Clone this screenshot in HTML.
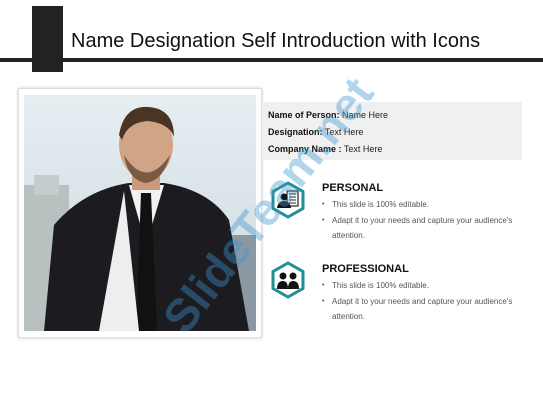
<!DOCTYPE html>
<html><head><style>
body{margin:0;width:543px;height:403px;background:#fff;font-family:"Liberation Sans",sans-serif;position:relative;overflow:hidden}
.abs{position:absolute}
.info{font-size:9px;color:#222;line-height:17px}
.info b{color:#111}
h3{margin:0;font-size:11px;font-weight:bold;color:#111}
ul{margin:0;padding:0;list-style:none;font-size:8px;color:#555;line-height:15.5px}
li{padding-left:10px;position:relative}
li:before{content:"•";position:absolute;left:0;font-size:7px}
</style></head><body>
<div class="abs" style="left:0;top:58px;width:543px;height:4px;background:#222"></div>
<div class="abs" style="left:32px;top:6px;width:31px;height:66px;background:#222"></div>
<div class="abs" style="left:71px;top:30px;font-size:20px;color:#111">Name Designation Self Introduction with Icons</div>

<div class="abs" style="left:18px;top:88px;width:242px;height:248px;border:1px solid #ddd;box-shadow:0 0 3px #ccc;background:#fff"></div>
<svg class="abs" style="left:24px;top:95px" width="232" height="236" viewBox="0 0 232 236">
<defs><linearGradient id="s" x1="0" y1="0" x2="0" y2="1"><stop offset="0" stop-color="#e6eef2"/><stop offset="1" stop-color="#cdd8de"/></linearGradient></defs>
<rect width="232" height="236" fill="url(#s)"/>
<rect x="0" y="90" width="45" height="146" fill="#b8c0c0"/>
<rect x="10" y="80" width="25" height="20" fill="#c5cccc"/>
<rect x="200" y="140" width="32" height="96" fill="#8a98a4"/>
<path d="M20 236 L30 130 Q60 95 105 88 L140 88 Q185 95 205 125 L225 236 Z" fill="#1c1c20"/>
<path d="M105 90 L122 150 L140 90 Z" fill="#f2f2f2"/>
<path d="M117 98 L127 98 L133 236 L112 236 Z" fill="#111"/>
<path d="M100 96 L115 236 L75 236 Z" fill="#eee"/>
<rect x="108" y="60" width="28" height="35" fill="#c99a7e"/>
<ellipse cx="122" cy="50" rx="27" ry="34" fill="#d2a487"/>
<path d="M95 40 Q100 10 125 12 Q150 14 150 42 Q145 28 123 26 Q103 28 98 45 Z" fill="#4a3524"/>
<path d="M100 60 Q122 95 146 60 Q140 85 122 88 Q104 85 100 60Z" fill="#7a5a44"/>
</svg>

<div class="abs" style="left:262px;top:102px;width:260px;height:58px;background:#f0f0f0"></div>
<div class="abs info" style="left:268px;top:107px">
<div><b>Name of Person:</b> Name Here</div>
<div><b>Designation:</b> Text Here</div>
<div><b>Company Name :</b> Text Here</div>
</div>

<svg class="abs" style="left:269px;top:181px" width="38" height="38" viewBox="0 0 38 38">
<polygon points="19,2 34,10.5 34,27.5 19,36 4,27.5 4,10.5" fill="#fff" stroke="#1e8f97" stroke-width="3" stroke-linejoin="round"/>
<rect x="18" y="10" width="11" height="15" fill="#fff" stroke="#222" stroke-width="1.2"/>
<path d="M20 13h7M20 16h7M20 19h7M20 22h7" stroke="#222"/>
<circle cx="15" cy="16" r="3.5" fill="#111"/>
<path d="M8 27 Q9 20 15 20 Q21 20 22 27Z" fill="#111"/>
</svg>
<div class="abs" style="left:322px;top:182px"><h3>PERSONAL</h3>
<ul style="margin-top:3px"><li>This slide is 100% editable.</li><li>Adapt it to your needs and capture your audience's<br>attention.</li></ul></div>

<svg class="abs" style="left:269px;top:261px" width="38" height="38" viewBox="0 0 38 38">
<polygon points="19,2 34,10.5 34,27.5 19,36 4,27.5 4,10.5" fill="#fff" stroke="#1e8f97" stroke-width="3" stroke-linejoin="round"/>
<circle cx="14" cy="15" r="3.5" fill="#111"/><circle cx="24" cy="15" r="3.5" fill="#111"/>
<path d="M8 28 Q8 20 14 20 Q19 20 19 28Z M19 28 Q19 20 24 20 Q30 20 30 28Z" fill="#111"/>
</svg>
<div class="abs" style="left:322px;top:263px"><h3>PROFESSIONAL</h3>
<ul style="margin-top:3px"><li>This slide is 100% editable.</li><li>Adapt it to your needs and capture your audience's<br>attention.</li></ul></div>

<div class="abs" style="left:268px;top:205px;transform:translate(-50%,-50%) rotate(-52deg);font-size:46px;font-weight:bold;color:rgba(60,150,210,0.4);white-space:nowrap">SlideTeam.net</div>
</body></html>
